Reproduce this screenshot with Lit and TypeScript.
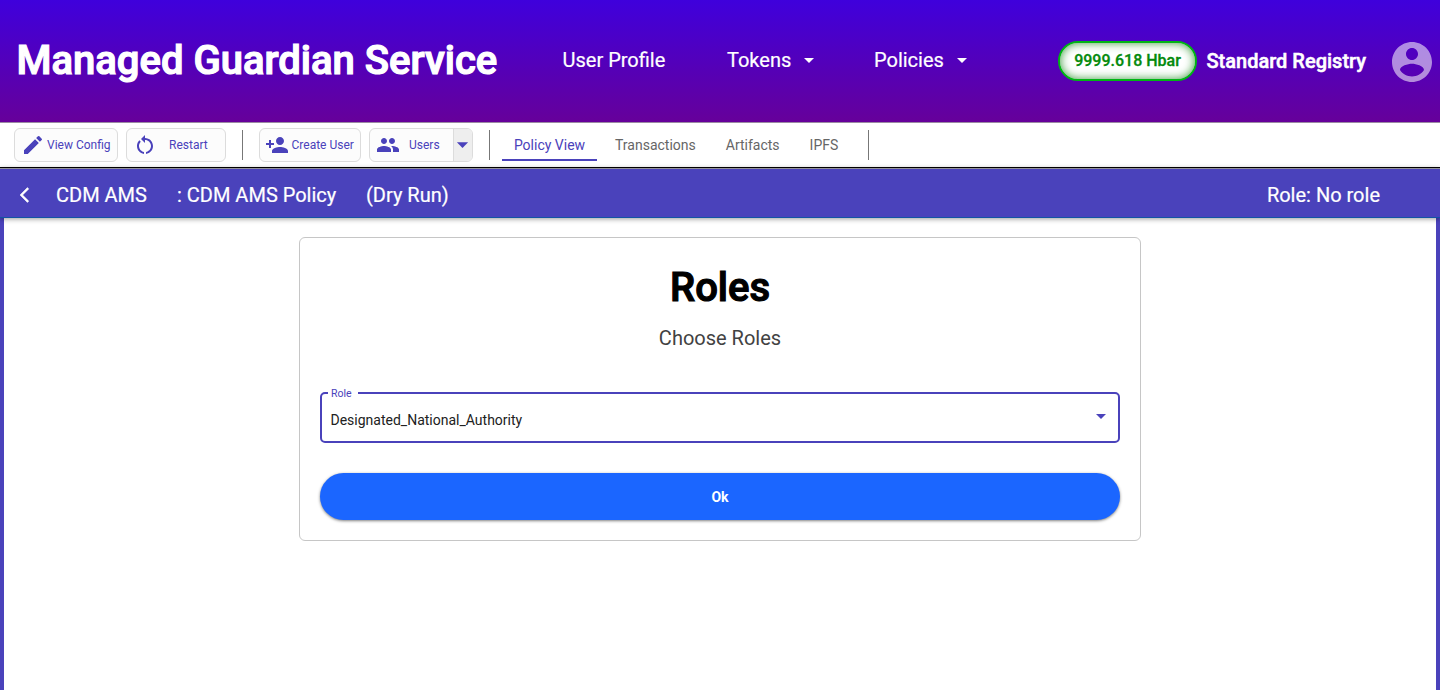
import { LitElement, html, css, svg } from "lit";
import { customElement } from "lit/decorators.js";

const icon = (path: unknown, cls: string) =>
  html`<svg class="icon ${cls}" viewBox="0 0 24 24" aria-hidden="true">${path}</svg>`;

const edit = svg`<path d="M3 17.25V21h3.75L17.81 9.94l-3.75-3.75L3 17.25zM20.71 7.04a.996.996 0 0 0 0-1.41l-2.34-2.34a.996.996 0 0 0-1.41 0l-1.83 1.83 3.75 3.75 1.83-1.83z"/>`;
const restart = svg`<path d="M12 5V2L8 6l4 4V7c3.31 0 6 2.69 6 6 0 2.97-2.17 5.43-5 5.91v2.02c3.95-.49 7-3.85 7-7.93 0-4.42-3.58-8-8-8z"/><path d="M6 13c0-1.65.67-3.15 1.76-4.24L6.34 7.34C4.9 8.79 4 10.79 4 13c0 4.08 3.05 7.44 7 7.93v-2.02c-2.83-.48-5-2.94-5-5.91z"/>`;
const personAdd = svg`<path d="M15 12c2.21 0 4-1.79 4-4s-1.79-4-4-4-4 1.79-4 4 1.79 4 4 4zm-9-2V7H4v3H1v2h3v3h2v-3h3v-2H6zm9 4c-2.67 0-8 1.34-8 4v2h16v-2c0-2.66-5.33-4-8-4z"/>`;
const people = svg`<path d="M16 11c1.66 0 2.99-1.34 2.99-3S17.66 5 16 5c-1.66 0-3 1.34-3 3s1.34 3 3 3zm-8 0c1.66 0 2.99-1.34 2.99-3S9.66 5 8 5C6.34 5 5 6.34 5 8s1.34 3 3 3zm0 2c-2.33 0-7 1.17-7 3.5V19h14v-2.5c0-2.33-4.67-3.5-7-3.5zm8 0c-.29 0-.62.02-.97.05 1.16.84 1.97 1.97 1.97 3.45V19h6v-2.5c0-2.33-4.67-3.5-7-3.5z"/>`;
const account = svg`<path d="M12 2C6.48 2 2 6.48 2 12s4.48 10 10 10 10-4.48 10-10S17.52 2 12 2zm0 3c1.66 0 3 1.34 3 3s-1.34 3-3 3-3-1.34-3-3 1.34-3 3-3zm0 14.2c-2.5 0-4.71-1.28-6-3.22.03-1.99 4-3.08 6-3.08 1.99 0 5.97 1.09 6 3.08-1.29 1.94-3.5 3.22-6 3.22z"/>`;
const back = svg`<path d="M11.67 3.87L9.9 2.1 0 12l9.9 9.9 1.77-1.77L3.54 12z"/>`;
const caret = svg`<path d="M7 10l5 5 5-5z"/>`;

@customElement("app-root")
export class AppRoot extends LitElement {
  static styles = css`
    :host {
      display: flex;
      flex-direction: column;
      height: 690px;
      overflow: hidden;
      background: #fff;
      font-family: Roboto, sans-serif;
      color: #000;
      white-space: nowrap;
    }
    * { box-sizing: border-box; }
    .icon { display: block; flex: none; fill: currentColor; width: 24px; height: 24px; }
    header {
      display: flex;
      align-items: center;
      flex: none;
      height: 123px;
      padding: 0 8px 0 16.5px;
      border-bottom: 1px solid #9a8aa3;
      background: linear-gradient(#3f00dc, #66009a);
      color: #fff;
    }
    .brand { width: 546px; padding-bottom: 1px; font-size: 40px; font-weight: 500; -webkit-text-stroke: 1.2px currentColor; }
    .nav { display: flex; align-items: center; font-size: 20px; margin-top: -2px; -webkit-text-stroke: .2px currentColor; }
    .profile { width: 164.5px; }
    .tokens { width: 147px; }
    .drop { display: flex; align-items: center; gap: 6px; }
    .balance {
      display: flex;
      align-items: center;
      justify-content: center;
      width: 139px;
      height: 40px;
      margin-left: auto;
      padding-bottom: 2px;
      border: 2px solid #00b414;
      border-radius: 20px;
      background: #fff;
      box-shadow: inset 0 0 10px #3c9b3c;
      color: #048a0c;
      font-size: 16px;
      font-weight: 500;
      -webkit-text-stroke: .3px currentColor;
    }
    .registry { width: 196px; padding-left: 9.5px; font-size: 20px; font-weight: 500; -webkit-text-stroke: .5px currentColor; }
    .avatar { width: 48px; height: 48px; margin: 1px -4px 0 -5px; opacity: .55; }
    .toolbar {
      display: flex;
      align-items: center;
      flex: none;
      height: 45px;
      padding: 0 0 1px 14px;
      border-bottom: 1px solid #000;
    }
    .tool {
      display: flex;
      align-items: center;
      height: 34px;
      border: 1px solid #dcdcdc;
      border-radius: 6px;
      background: #fcfcfc;
      color: #4a42bb;
      font-size: 12px;
      overflow: hidden;
    }
    .config { width: 104px; padding-left: 6px; gap: 2px; margin-right: 8px; }
    .restart { width: 100px; padding-left: 5.5px; gap: 12.5px; }
    .create { width: 102px; padding-left: 5px; gap: 2.5px; margin-right: 8px; }
    .users { width: 104px; padding-left: 5.5px; gap: 9.5px; }
    .more {
      display: flex;
      align-items: center;
      justify-content: center;
      width: 19.5px;
      height: 100%;
      margin-left: auto;
      border-left: 1px solid #dcdcdc;
      background: #eee;
    }
    .more-caret { width: 27px; height: 27px; }
    .rule { width: 1px; height: 30px; margin: 0 16px; background: #777; }
    .rule.tabs-start { margin-right: 12px; }
    .rule.tabs-end { margin-left: 15px; }
    .tabs { display: flex; height: 34px; font-size: 14px; color: #666; }
    .tab { display: flex; align-items: center; height: 34px; padding: 1px 15px 0; }
    .tab.active { width: 95px; height: 33px; padding: 4px 0 0; justify-content: center; margin-right: 3px; border-bottom: 2px solid #4a42bb; color: #4a42bb; }
    .policy {
      display: flex;
      align-items: center;
      flex: none;
      height: 50px;
      padding: 4px 60px 0 20px;
      border-top: 1px solid #92919b;
      border-bottom: 1px solid #1254a5;
      background: #4a42bb;
      box-shadow: 0 1px 5px rgba(0, 0, 0, .4);
      color: #fff;
      font-size: 20px;
      -webkit-text-stroke: .2px currentColor;
      z-index: 1;
    }
    .back { width: 18px; height: 18px; margin-right: 18px; overflow: visible; stroke: currentColor; stroke-width: .7; }
    .name { width: 121px; }
    .title { width: 189px; }
    .role { margin-left: auto; }
    main {
      display: flex;
      justify-content: center;
      align-items: flex-start;
      flex: 1;
      padding-top: 19px;
      border: solid #4a42bb;
      border-width: 0 4px;
    }
    .card {
      display: flex;
      flex-direction: column;
      width: 842px;
      height: 304px;
      padding: 0 20px;
      border: 1px solid #c6c6c6;
      border-radius: 6px;
      text-align: center;
    }
    h1 { margin: 25px 0 0; font-size: 40px; line-height: 50px; font-weight: 500; -webkit-text-stroke: 1.2px currentColor; }
    .hint { margin: 13px 0 0; font-size: 20px; line-height: 24px; color: #424242; }
    fieldset {
      display: flex;
      align-items: flex-start;
      justify-content: space-between;
      min-width: 0;
      height: 57px;
      margin: 36px 0 0;
      padding: 0 5px 0 8.5px;
      border: 2px solid #4a42bb;
      border-radius: 5px;
      text-align: left;
    }
    legend { margin-left: -2.5px; padding: 2px 6px 0 3px; font-size: 10.5px; line-height: 12px; color: #4a42bb; }
    .value { margin-top: 12px; font-size: 14px; line-height: 16px; color: #212121; }
    .arrow { margin-top: 4px; color: #4a42bb; }
    .ok {
      height: 47px;
      margin: 30px 0 0;
      padding: 0;
      border: 0;
      border-radius: 24px;
      background: #1b66ff;
      box-shadow: 0 1px 3px rgba(0, 0, 0, .5);
      color: #fff;
      font: 700 14px Roboto, sans-serif;
    }
  `;

  render() {
    return html`
      <header>
        <div class="brand">Managed Guardian Service</div>
        <nav class="nav">
          <span class="profile">User Profile</span>
          <span class="drop tokens">Tokens ${icon(caret, "")}</span>
          <span class="drop">Policies ${icon(caret, "")}</span>
        </nav>
        <div class="balance">9999.618 Hbar</div>
        <div class="registry">Standard Registry</div>
        ${icon(account, "avatar")}
      </header>
      <div class="toolbar">
        <div class="tool config">${icon(edit, "")}<span>View Config</span></div>
        <div class="tool restart">${icon(restart, "")}<span>Restart</span></div>
        <div class="rule"></div>
        <div class="tool create">${icon(personAdd, "")}<span>Create User</span></div>
        <div class="tool users">${icon(people, "")}<span>Users</span><span class="more">${icon(caret, "more-caret")}</span></div>
        <div class="rule tabs-start"></div>
        <div class="tabs">
          <div class="tab active">Policy View</div>
          <div class="tab">Transactions</div>
          <div class="tab">Artifacts</div>
          <div class="tab">IPFS</div>
        </div>
        <div class="rule tabs-end"></div>
      </div>
      <div class="policy">
        ${icon(back, "back")}
        <span class="name">CDM AMS</span>
        <span class="title">: CDM AMS Policy</span>
        <span>(Dry Run)</span>
        <span class="role">Role: No role</span>
      </div>
      <main>
        <section class="card">
          <h1>Roles</h1>
          <p class="hint">Choose Roles</p>
          <fieldset>
            <legend>Role</legend>
            <span class="value">Designated_National_Authority</span>
            ${icon(caret, "arrow")}
          </fieldset>
          <button class="ok">Ok</button>
        </section>
      </main>
    `;
  }
}
